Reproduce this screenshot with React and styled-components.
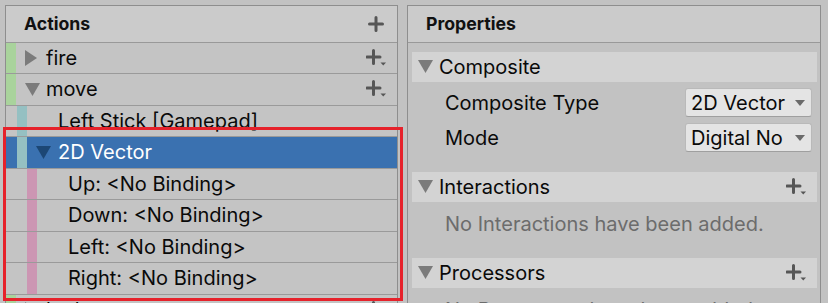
import styled, { createGlobalStyle } from "styled-components";

const GlobalStyle = createGlobalStyle`
  html, body {
    margin: 0;
    padding: 0;
    background: #c2c2c2;
    font-family: Inter, "Noto Sans", sans-serif;
    color: #0a0a0a;
    overflow: hidden;
  }
`;

const actions = [
  { kind: "action", label: "fire", open: false },
  { kind: "action", label: "move", open: true },
  { kind: "binding", label: "Left Stick [Gamepad]" },
  { kind: "binding", label: "2D Vector", open: true, composite: true, selected: true },
  { kind: "part", label: "Up: <No Binding>" },
  { kind: "part", label: "Down: <No Binding>" },
  { kind: "part", label: "Left: <No Binding>" },
  { kind: "part", label: "Right: <No Binding>" },
  { kind: "action", label: "look", open: false },
];

const barColors = {
  action: "#a9d39c",
  binding: "#95c0c2",
  part: "#cc96b3",
};

const barOffset = { action: 0, binding: 11, part: 21 };

function Plus() {
  return (
    <svg width="16" height="16" viewBox="0 0 16 16">
      <path d="M8 1.5v13M1.5 8h13" stroke="#565656" strokeWidth="3" strokeLinecap="round" />
    </svg>
  );
}

function PlusMore() {
  return (
    <svg width="21" height="18" viewBox="0 0 21 18">
      <path d="M7.5 1.5v13M1 8h13" stroke="#565656" strokeWidth="3" strokeLinecap="round" />
      <path d="M14.5 13.5h5.5l-2.75 3z" fill="#565656" />
    </svg>
  );
}

function Arrow({ open, color = "#7b7b7b" }) {
  return open ? (
    <svg width="15" height="13" viewBox="0 0 15 13">
      <path d="M0 0h15L7.5 13z" fill={color} />
    </svg>
  ) : (
    <svg width="12" height="16" viewBox="0 0 12 16">
      <path d="M0 0l12 8L0 16z" fill={color} />
    </svg>
  );
}

function App() {
  return (
    <>
      <GlobalStyle />
      <Page>
        <Panel $width={393}>
          <PanelHeader>
            <span>Actions</span>
            <Plus />
          </PanelHeader>
          {actions.map((row, i) => (
            <TreeRow key={i} $selected={row.selected}>
              <Bar $color={barColors[row.kind]} $offset={barOffset[row.kind]} />
              <ArrowSlot $wide={row.kind === "action" ? 30 : 31}>
                {(row.kind === "action" || row.composite) && (
                  <Arrow open={row.open} color={row.selected ? "#1c4775" : "#7b7b7b"} />
                )}
              </ArrowSlot>
              <RowLabel>{row.label}</RowLabel>
              {row.kind === "action" && <PlusMore />}
            </TreeRow>
          ))}
        </Panel>
        <Panel $width={414}>
          <PanelHeader>
            <span>Properties</span>
          </PanelHeader>
          <Body>
            <Section>
              <Foldout>
                <Arrow open />
                <FoldoutTitle>Composite</FoldoutTitle>
              </Foldout>
              <Fields>
                <Field>
                  <FieldLabel>Composite Type</FieldLabel>
                  <Dropdown>
                    <DropText>2D Vector</DropText>
                    <DropArrow />
                  </Dropdown>
                </Field>
                <Field>
                  <FieldLabel>Mode</FieldLabel>
                  <Dropdown>
                    <DropText>Digital No</DropText>
                    <DropArrow />
                  </Dropdown>
                </Field>
              </Fields>
            </Section>
            <Section>
              <Foldout>
                <Arrow open />
                <FoldoutTitle>Interactions</FoldoutTitle>
                <PlusMore />
              </Foldout>
              <Message>No Interactions have been added.</Message>
            </Section>
            <Section>
              <Foldout>
                <Arrow open />
                <FoldoutTitle>Processors</FoldoutTitle>
                <PlusMore />
              </Foldout>
              <Message>No Processors have been added.</Message>
            </Section>
          </Body>
        </Panel>
        <Highlight />
      </Page>
    </>
  );
}

const Page = styled.div`
  position: relative;
  display: flex;
  gap: 9px;
  height: 303px;
  padding: 5px 0 0 5px;
  box-sizing: border-box;
  overflow: hidden;
`;

const Panel = styled.div`
  width: ${(p) => p.$width}px;
  flex: none;
  box-sizing: border-box;
  border: 1px solid #8e8e8e;
  border-bottom: none;
  display: flex;
  flex-direction: column;
  overflow: hidden;
`;

const PanelHeader = styled.div`
  height: 35.5px;
  flex: none;
  display: flex;
  align-items: center;
  justify-content: space-between;
  padding: 0 13px 0 18px;
  background: #cbcbcb;
  border-bottom: 1px solid #999;
  font-size: 17.7px;
  font-weight: 700;
  color: #111;
`;

const TreeRow = styled.div`
  height: 30.5px;
  flex: none;
  display: flex;
  align-items: center;
  padding-right: 10px;
  background: ${(p) => (p.$selected ? "#3a71b0" : "#c4c4c4")};
  color: ${(p) => (p.$selected ? "#fff" : "#0a0a0a")};
  border-bottom: 1px solid #9a9a9a;
`;

const Bar = styled.div`
  align-self: stretch;
  width: 10px;
  flex: none;
  margin-left: ${(p) => p.$offset}px;
  background: ${(p) => p.$color};
`;

const ArrowSlot = styled.div`
  width: ${(p) => p.$wide - 9}px;
  flex: none;
  padding-left: 9px;
  display: flex;
  align-items: center;
`;

const RowLabel = styled.div`
  flex: 1;
  font-size: 20px;
  white-space: nowrap;
`;

const Body = styled.div`
  display: flex;
  flex-direction: column;
  padding: 9px 3px 0 4px;
`;

const Section = styled.div`
  display: flex;
  flex-direction: column;
  margin-bottom: 19px;
`;

const Foldout = styled.div`
  height: 30px;
  display: flex;
  align-items: center;
  gap: 6px;
  padding: 0 10px 0 6px;
  background: #d3d3d3;
`;

const FoldoutTitle = styled.div`
  flex: 1;
  font-size: 20px;
`;

const Fields = styled.div`
  display: flex;
  flex-direction: column;
  gap: 5px;
  padding: 6px 5px 0 33px;
`;

const Field = styled.div`
  height: 30px;
  display: flex;
  align-items: center;
  justify-content: space-between;
`;

const FieldLabel = styled.div`
  font-size: 20px;
`;

const Dropdown = styled.div`
  width: 127px;
  height: 29px;
  box-sizing: border-box;
  display: flex;
  align-items: center;
  gap: 2px;
  padding: 0 6px 0 5px;
  background: #e4e4e4;
  border: 1px solid #b9b9b9;
  border-bottom-color: #9f9f9f;
  border-radius: 3px;
`;

const DropText = styled.div`
  flex: 1;
  font-size: 20px;
  white-space: nowrap;
  overflow: hidden;
`;

const DropArrow = styled.div`
  flex: none;
  width: 0;
  height: 0;
  border-left: 5px solid transparent;
  border-right: 5px solid transparent;
  border-top: 6px solid #6a6a6a;
`;

const Message = styled.div`
  height: 30px;
  margin-top: 7px;
  display: flex;
  align-items: center;
  padding-left: 33px;
  font-size: 20px;
  color: #6c6c6c;
  white-space: nowrap;
`;

const Highlight = styled.div`
  position: absolute;
  left: 3px;
  top: 127px;
  width: 400px;
  height: 174px;
  box-sizing: border-box;
  border: 3px solid #e6222b;
  pointer-events: none;
`;

export default App;
